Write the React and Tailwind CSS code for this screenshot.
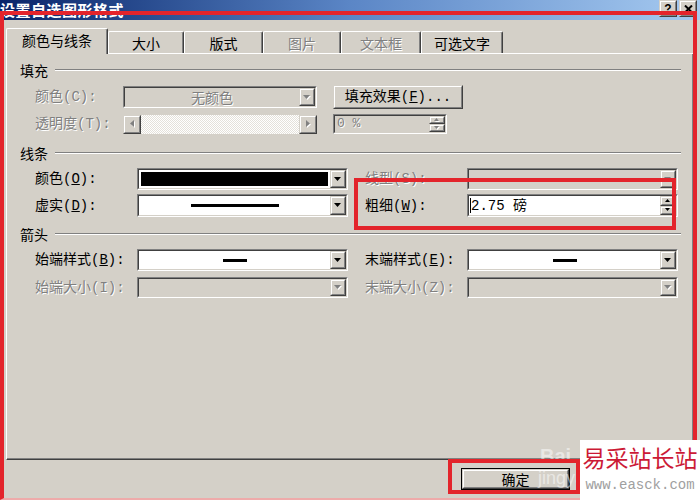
import React from "react";

function Sunken({ className = "", inner = "", children }) {
  return (
    <div className={"border border-t-[#808080] border-l-[#808080] border-r-white border-b-white " + className}>
      <div className={"h-full w-full border border-t-[#404040] border-l-[#404040] border-r-[#d4d0c8] border-b-[#d4d0c8] flex items-stretch " + inner}>
        {children}
      </div>
    </div>
  );
}

function Raised({ className = "", children }) {
  return (
    <div className={"border border-t-[#d4d0c8] border-l-[#d4d0c8] border-r-[#404040] border-b-[#404040] bg-[#d4d0c8] " + className}>
      <div className="h-full w-full border border-t-white border-l-white border-r-[#808080] border-b-[#808080] flex items-center justify-center">
        {children}
      </div>
    </div>
  );
}

function Tri({ dir = "down", disabled = false, size = 7 }) {
  const s = size;
  const h = Math.ceil(s / 2);
  let pts, w, hh;
  if (dir === "down") { pts = `0,0 ${s},0 ${s / 2},${h}`; w = s; hh = h; }
  else if (dir === "up") { pts = `0,${h} ${s},${h} ${s / 2},0`; w = s; hh = h; }
  else if (dir === "left") { pts = `${h},0 ${h},${s} 0,${s / 2}`; w = h; hh = s; }
  else { pts = `0,0 0,${s} ${h},${s / 2}`; w = h; hh = s; }
  return (
    <svg width={w + 1} height={hh + 1} viewBox={`0 0 ${w + 1} ${hh + 1}`}>
      {disabled && <polygon points={pts} fill="#ffffff" transform="translate(1,1)" />}
      <polygon points={pts} fill={disabled ? "#808080" : "#000000"} />
    </svg>
  );
}

function DropBtn({ disabled = false }) {
  return (
    <Raised className="w-[16px] h-full shrink-0">
      <Tri dir="down" disabled={disabled} />
    </Raised>
  );
}

function Spin({ disabled = false }) {
  return (
    <div className="w-[16px] h-full flex flex-col shrink-0">
      <Raised className="flex-1">
        <Tri dir="up" size={5} disabled={disabled} />
      </Raised>
      <Raised className="flex-1">
        <Tri dir="down" size={5} disabled={disabled} />
      </Raised>
    </div>
  );
}

const dis = "text-[#808080] [text-shadow:1px_1px_0_#ffffff]";
const lab = "font-['Liberation_Mono','Noto_Sans_CJK_SC',monospace] leading-[16px] whitespace-nowrap";

function Header({ text, className }) {
  return (
    <div className={"flex items-center h-[16px] pl-[13px] pr-[12px] " + className}>
      <span className="leading-[16px]">{text}</span>
      <div className="flex-1 ml-[7px] h-[2px] border-t border-t-[#808080] border-b border-b-white" />
    </div>
  );
}

function Tab({ label, className, disabled = false, active = false }) {
  return (
    <div
      className={
        "flex items-center justify-center bg-[#d4d0c8] border-t border-l border-t-white border-l-white border-r border-r-[#404040] shadow-[inset_-1px_0_0_#808080] rounded-tl-[2px] rounded-tr-[2px] text-[14px] leading-[16px] " +
        (active ? "relative z-10 -mb-px h-[26px] -ml-[2px] pb-[3px] " : "h-[22px] pt-[1px] ") +
        (disabled ? dis + " " : "text-black ") +
        className
      }
    >
      {label}
    </div>
  );
}

export default function App() {
  return (
    <div className="w-[700px] h-[500px] relative overflow-hidden bg-[#d4d0c8] flex flex-col font-['Noto_Sans_CJK_SC','Noto_Sans',sans-serif] text-[14px] text-black">
      {/* Title bar */}
      <div className="h-[20px] shrink-0 flex items-start bg-gradient-to-r from-[#0a246a] via-[#5b86c6] to-[#a6caf0]">
        <div className="text-white font-bold text-[15px] leading-[18px] mt-[1px] tracking-[0.5px] whitespace-nowrap">设置自选图形格式</div>
        <div className="flex-1" />
        <Raised className="w-[18px] h-[17px] mr-[2px]">
          <span className="font-['Liberation_Sans'] font-bold text-[12px] leading-none">?</span>
        </Raised>
        <Raised className="w-[18px] h-[17px] mr-[3px]">
          <svg width="9" height="8" viewBox="0 0 9 8">
            <path d="M1 0.5 L8 7.5 M8 0.5 L1 7.5" stroke="#000" strokeWidth="2" />
          </svg>
        </Raised>
      </div>

      {/* Tabs */}
      <div className="flex items-end h-[25px] mt-[8px] pl-[8px] shrink-0">
        <Tab label="颜色与线条" active className="w-[102px]" />
        <Tab label="大小" className="w-[76px]" />
        <Tab label="版式" className="w-[79px]" />
        <Tab label="图片" disabled className="w-[78px]" />
        <Tab label="文本框" disabled className="w-[80px]" />
        <Tab label="可选文字" className="w-[82px]" />
      </div>

      {/* Panel */}
      <div className="ml-[6px] w-[688px] h-[407px] shrink-0 border-t border-l border-t-white border-l-white border-r border-b border-r-[#404040] border-b-[#404040] shadow-[inset_-1px_-1px_0_#808080] flex flex-col">
        <Header text="填充" className="mt-[8px]" />

        {/* Fill color */}
        <div className="flex items-center h-[22px] mt-[8px] pl-[28px]">
          <span className={"w-[88px] " + lab + " " + dis}>颜色(C):</span>
          <Sunken className="w-[194px] h-[22px] bg-[#d4d0c8]">
            <div className={"flex-1 flex items-center justify-center leading-[16px] " + dis}>无颜色</div>
            <DropBtn disabled />
          </Sunken>
          <Raised className="ml-[16px] w-[130px] h-[24px]">
            <span className={lab}>填充效果(<u>F</u>)...</span>
          </Raised>
        </div>

        {/* Transparency */}
        <div className="flex items-center h-[20px] mt-[6px] pl-[28px]">
          <span className={"w-[88px] " + lab + " " + dis}>透明度(T):</span>
          <div className="w-[194px] h-[19px] flex">
            <Raised className="w-[18px] h-full">
              <Tri dir="left" disabled />
            </Raised>
            <div className="flex-1 h-full bg-[repeating-conic-gradient(#ffffff_0_25%,#e4e1da_0_50%)] bg-[length:2px_2px]" />
            <Raised className="w-[18px] h-full">
              <Tri dir="right" disabled />
            </Raised>
          </div>
          <Sunken className="ml-[16px] w-[114px] h-[20px] bg-[#d4d0c8]">
            <div className={"flex-1 flex items-center pl-[2px] font-['Liberation_Mono'] text-[13px] " + dis}>0 %</div>
            <Spin disabled />
          </Sunken>
        </div>

        <Header text="线条" className="mt-[11px]" />

        {/* Line color / type */}
        <div className="flex items-center h-[22px] mt-[7px] pl-[28px]">
          <span className={"w-[102px] " + lab}>颜色(<u>O</u>):</span>
          <Sunken className="w-[211px] h-[22px] bg-white">
            <div className="flex-1 p-[2px]">
              <div className="w-full h-full bg-black" />
            </div>
            <DropBtn />
          </Sunken>
          <span className={"ml-[17px] w-[102px] " + lab + " " + dis}>线型(S):</span>
          <Sunken className="w-[211px] h-[22px] bg-[#d4d0c8]">
            <div className="flex-1" />
            <DropBtn disabled />
          </Sunken>
        </div>

        {/* Dash / weight */}
        <div className="flex items-center h-[23px] mt-[4px] pl-[28px]">
          <span className={"w-[102px] " + lab}>虚实(<u>D</u>):</span>
          <Sunken className="w-[211px] h-[23px] bg-white">
            <div className="flex-1 flex items-center justify-center">
              <div className="w-[88px] h-[3px] bg-black" />
            </div>
            <DropBtn />
          </Sunken>
          <span className={"ml-[17px] w-[102px] " + lab}>粗细(<u>W</u>):</span>
          <Sunken className="w-[211px] h-[23px] bg-white">
            <div className="flex-1 flex items-center pl-[1px]">
              <div className="w-[1px] h-[15px] bg-black" />
              <span className="font-['Liberation_Mono','Noto_Sans_CJK_SC',monospace] text-[14px] leading-[16px]">2.75 磅</span>
            </div>
            <Spin />
          </Sunken>
        </div>

        <Header text="箭头" className="mt-[9px]" />

        {/* Begin / end style */}
        <div className="flex items-center h-[22px] mt-[7px] pl-[28px]">
          <span className={"w-[102px] " + lab}>始端样式(<u>B</u>):</span>
          <Sunken className="w-[211px] h-[22px] bg-white">
            <div className="flex-1 flex items-center justify-center">
              <div className="w-[24px] h-[3px] bg-black" />
            </div>
            <DropBtn />
          </Sunken>
          <span className={"ml-[17px] w-[102px] " + lab}>末端样式(<u>E</u>):</span>
          <Sunken className="w-[211px] h-[22px] bg-white">
            <div className="flex-1 flex items-center justify-center">
              <div className="w-[24px] h-[3px] bg-black" />
            </div>
            <DropBtn />
          </Sunken>
        </div>

        {/* Begin / end size */}
        <div className="flex items-center h-[21px] mt-[6px] pl-[28px]">
          <span className={"w-[102px] " + lab + " " + dis}>始端大小(I):</span>
          <Sunken className="w-[211px] h-[21px] bg-[#d4d0c8]">
            <div className="flex-1" />
            <DropBtn disabled />
          </Sunken>
          <span className={"ml-[17px] w-[102px] " + lab + " " + dis}>末端大小(Z):</span>
          <Sunken className="w-[211px] h-[21px] bg-[#d4d0c8]">
            <div className="flex-1" />
            <DropBtn disabled />
          </Sunken>
        </div>
      </div>

      {/* Bottom buttons */}
      <div className="flex mt-[8px] pl-[461px] shrink-0">
        <div className="w-[109px] h-[22px] border border-black">
          <Raised className="w-full h-full">
            <span className="leading-[16px]">确定</span>
          </Raised>
        </div>
      </div>

      {/* faint background watermark */}
      <div className="absolute left-[540px] top-[446px] text-white/50 font-['Liberation_Sans'] font-bold text-[20px] leading-[20px]">Bai</div>
      <div className="absolute left-[538px] top-[468px] text-white/50 font-['Liberation_Sans'] text-[18px] leading-[20px]">jingyan</div>

      {/* red annotation rectangles */}
      <div className="absolute left-0 top-[11px] w-[697px] h-[489px] border-l-4 border-t-4 border-r-4 border-b-2 border-l-[#e3242b] border-t-[#e3242b] border-r-[#e3242b] border-b-[#eeaaaa]" />
      <div className="absolute left-[354px] top-[178px] w-[322px] h-[52px] border-4 border-[#e3242b]" />
      <div className="absolute left-[448px] top-[459px] w-[132px] h-[35px] border-4 border-[#e3242b]" />

      {/* site watermark */}
      <div className="absolute left-[580px] top-[440px] w-[120px] h-[60px] bg-white flex flex-col items-center">
        <div className="text-[#cc1a36] text-[23px] leading-[28px] mt-[3px] whitespace-nowrap">易采站长站</div>
        <div className="text-[#a0a0a0] text-[14px] leading-[16px] mt-[6px] font-['Liberation_Mono',monospace] whitespace-nowrap">www.easck.com</div>
      </div>
    </div>
  );
}
